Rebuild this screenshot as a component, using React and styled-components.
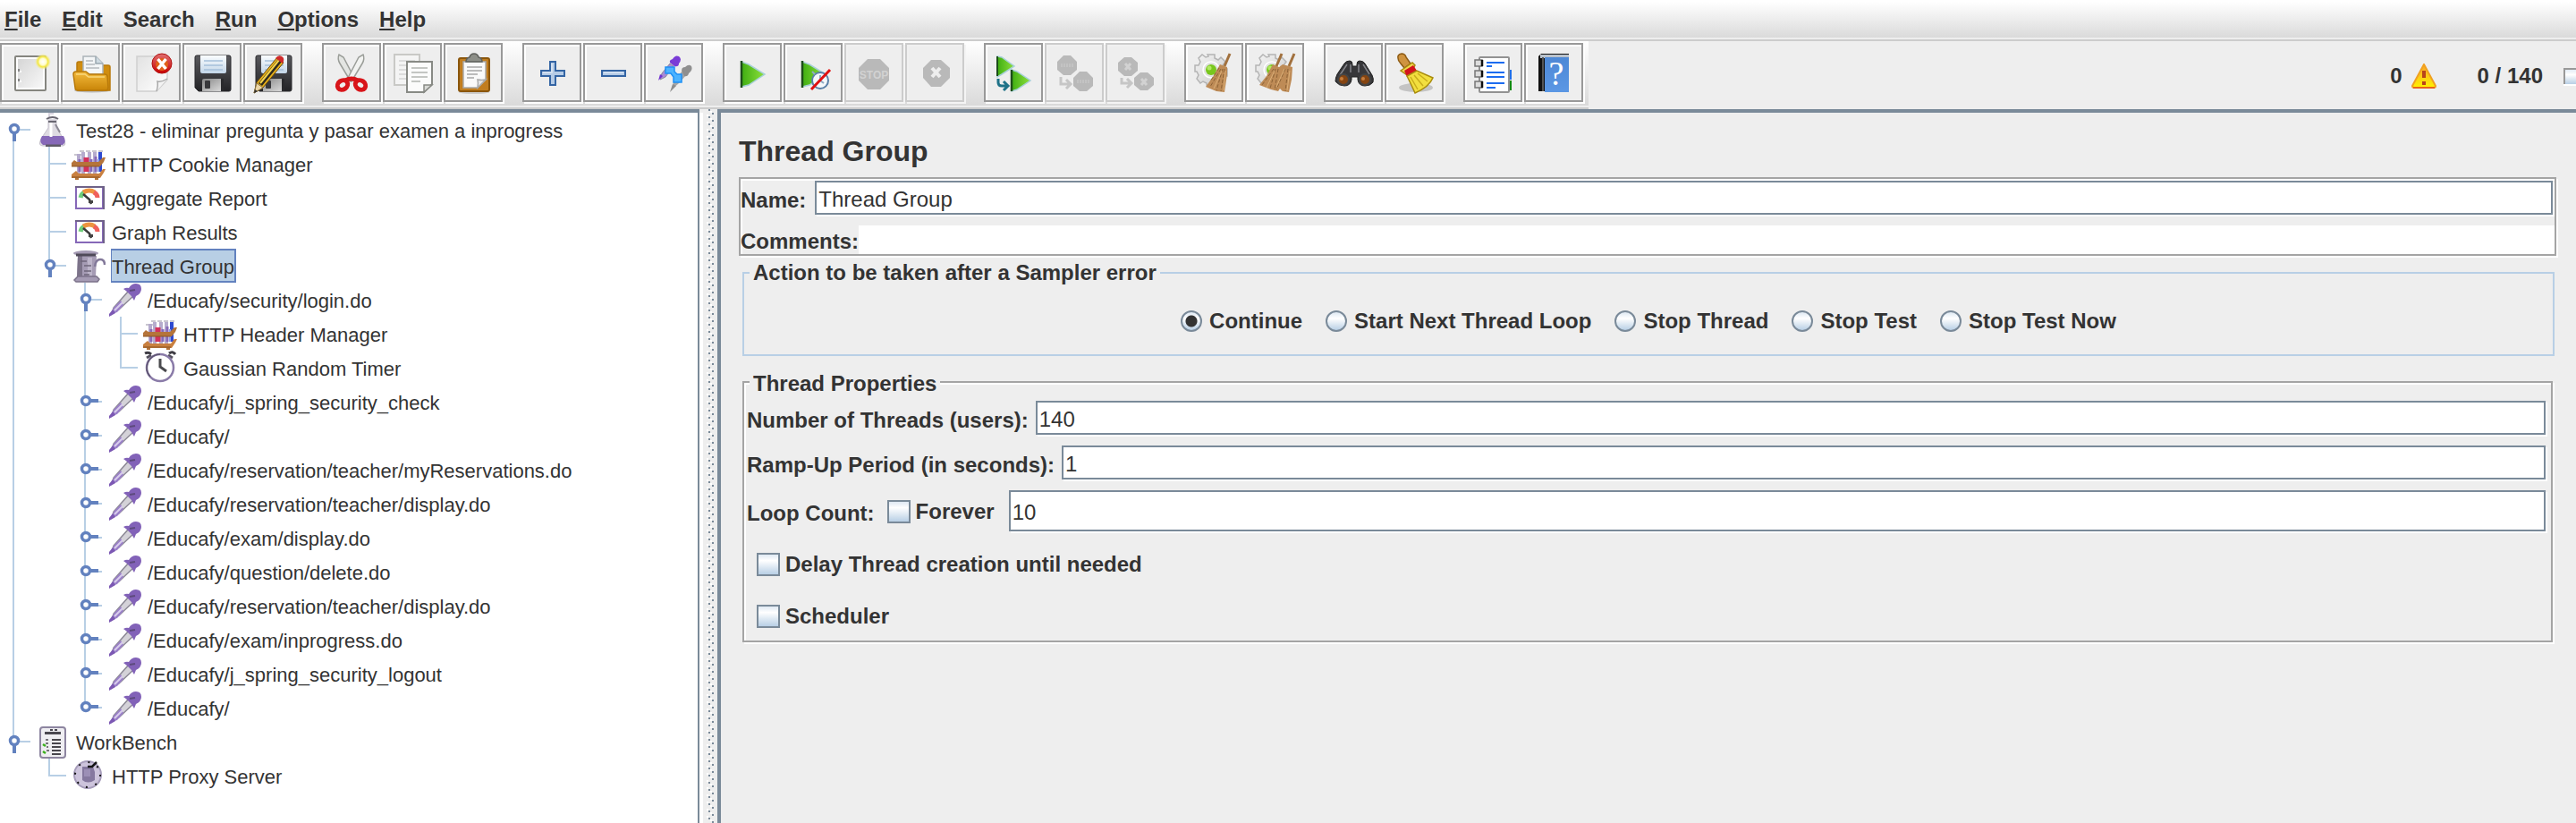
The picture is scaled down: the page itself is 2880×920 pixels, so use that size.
import React, { useState } from "react";
import styled, { createGlobalStyle, css } from "styled-components";

const C = {
  panel: "#eeeeee",
  text: "#333333",
  steel: "#7a8a99",
  gray: "#999999",
  etched: "#a4a4a4",
  sky: "#b8cfe5",
  blue: "#6382bf",
};

const GlobalStyle = createGlobalStyle`
  * { box-sizing: border-box; }
  body {
    margin: 0;
    background: ${C.panel};
    color: ${C.text};
    font: bold 24px/28px "Liberation Sans", Arial, sans-serif;
  }
  button, input { font: inherit; color: inherit; margin: 0; }
`;

const Window = styled.div`
  display: flex;
  flex-direction: column;
  min-height: 100vh;
  overflow: hidden;
`;

/* ---------- menu bar ---------- */

const MenuBar = styled.nav`
  display: flex;
  gap: 23px;
  height: 46px;
  padding: 8px 5px 0;
  border-bottom: 2px solid #cccccc;
  background: linear-gradient(#ffffff 2px, #dadada 42px, ${C.panel} 42px);
`;

const MenuItem = styled.button`
  padding: 0;
  border: 0;
  background: none;
  height: 28px;
`;

const Mnemonic = styled.span`
  text-decoration: underline 2px;
  text-underline-offset: 2px;
  text-decoration-skip-ink: none;
`;

/* ---------- tool bar ---------- */

const ToolRow = styled.header`
  display: flex;
  align-items: flex-start;
  justify-content: space-between;
`;

const ToolBar = styled.div`
  display: flex;
  gap: 22px;
  height: 76px;
  padding: 2px 6px 0 0;
  border-bottom: 2px solid #cccccc;
  background: linear-gradient(#ffffff, #dadada 72px, ${C.panel} 72px);
`;

const ToolGroup = styled.div`
  display: flex;
  gap: 2px;
`;

const ToolButton = styled.button`
  display: flex;
  align-items: center;
  justify-content: center;
  width: 66px;
  height: 66px;
  padding: 0;
  border: 2px solid ${C.gray};
  background: ${C.panel};
  box-shadow: 2px 2px 0 #fff, inset 2px 2px 0 #fff;
  &:disabled {
    border-color: #cccccc;
    box-shadow: 2px 2px 0 #f4f4f4, inset 2px 2px 0 #f0f0f0;
  }
`;

const Status = styled.div`
  display: flex;
  align-items: center;
  height: 76px;
  padding-top: 2px;
`;

const Warnings = styled.div`
  display: flex;
  align-items: center;
  gap: 10px;
  margin-right: 46px;
`;

const Activity = styled.div`
  width: 14px;
  height: 18px;
  margin-left: 23px;
  border: 2px solid ${C.gray};
  border-width: 2px 0 0 2px;
  background: linear-gradient(#e3ecf5, #ffffff 35%, ${C.sky});
  box-shadow: 0 2px 0 #fff;
`;

/* ---------- split pane ---------- */

const Split = styled.main`
  display: flex;
  flex: 1;
`;

const TreePane = styled.aside`
  flex: 0 0 782px;
  border-top: 4px solid ${C.steel};
  border-right: 2px solid ${C.steel};
  background: #fff;
  margin-right: 4px;
  box-shadow: 4px 4px 0 #fff;
`;

const Divider = styled.div`
  flex: 0 0 16px;
  background:
    conic-gradient(from 270deg at 2px 2px, ${C.steel} 90deg, transparent 0) 6px 8px / 8px 8px repeat-y,
    conic-gradient(from 270deg at 2px 2px, ${C.steel} 90deg, transparent 0) 10px 12px / 8px 8px repeat-y,
    conic-gradient(from 270deg at 2px 2px, #fff 90deg, transparent 0) 4px 6px / 8px 8px repeat-y,
    conic-gradient(from 270deg at 2px 2px, #fff 90deg, transparent 0) 8px 10px / 8px 8px repeat-y,
    ${C.panel};
`;

const Editor = styled.section`
  flex: 1;
  min-width: 0;
  padding: 25px 20px 20px;
  border: solid ${C.steel};
  border-width: 4px 0 0 4px;
`;

/* ---------- tree ---------- */

const Row = styled.div`
  display: flex;
  height: 38px;
`;

const Label = styled.span`
  height: 38px;
  margin-left: 6px;
  padding-top: 2px;
  font-weight: normal;
  font-size: 22px;
  line-height: 34px;
  white-space: pre;
  border: 2px solid transparent;
  border-left-width: 1px;
  ${(p) =>
    p.$selected &&
    css`
      border-color: ${C.blue};
      background: ${C.sky};
    `}
`;

/* ---------- editor ---------- */

const etched = css`
  border: 2px solid ${C.etched};
  box-shadow: 2px 2px 0 #fff, inset 2px 2px 0 #fff;
`;

const Title = styled.h1`
  margin: 0 0 11px;
  font-size: 32px;
  line-height: 36px;
`;

const NamePanel = styled.div`
  ${etched}
  display: flex;
  flex-direction: column;
  gap: 10px;
  margin: 0 2px 5px 0;
  padding-top: 2px;
`;

const Field = styled.div`
  display: flex;
  align-items: center;
  height: ${(p) => p.$height || 40}px;
`;

const FieldLabel = styled.label`
  flex: none;
  padding-top: 4px;
`;

const TextInput = styled.input`
  flex: 1;
  min-width: 0;
  align-self: stretch;
  margin: 0 2px 2px 10px;
  padding: 4px 2px 0;
  border: 2px solid ${C.steel};
  border-radius: 0;
  outline: 0;
  background: #fff;
  font-weight: normal;
  box-shadow: 2px 2px 0 #fff;
`;

const CommentInput = styled(TextInput)`
  margin: 0;
  border: 0;
  box-shadow: none;
`;

const ActionBox = styled.fieldset`
  min-width: 0;
  margin: 0 4px 13px;
  padding: 26px 0 23px;
  border: 2px solid ${C.sky};
`;

const ThreadBox = styled.fieldset`
  ${etched}
  min-width: 0;
  margin: 0 6px 0 4px;
  padding: 5px 4px 13px 3px;
`;

const Legend = styled.legend`
  margin-left: ${(p) => p.$indent}px;
  padding: ${(p) => p.$drop}px 4px 0;
  background: ${C.panel};
`;

const RadioRow = styled.div`
  display: flex;
  justify-content: center;
  gap: 26px;
`;

const Choice = styled.label`
  display: flex;
  align-items: center;
  gap: 8px;
  height: 28px;
`;

const Radio = styled.input.attrs({ type: "radio" })`
  appearance: none;
  width: 24px;
  height: 24px;
  border: 2px solid ${C.steel};
  border-radius: 50%;
  background: linear-gradient(#dfe9f3, #ffffff 35%, ${C.sky});
  &:checked {
    background: radial-gradient(circle, ${C.text} 6px, transparent 7px),
      linear-gradient(#dfe9f3, #ffffff 35%, ${C.sky});
  }
`;

const Check = styled.input.attrs({ type: "checkbox" })`
  appearance: none;
  width: 26px;
  height: 26px;
  border: 2px solid ${C.steel};
  background: linear-gradient(#dfe9f3, #ffffff 30%, ${C.sky});
  &:checked {
    background: ${C.steel};
  }
`;

const CheckLabel = styled(Choice)`
  gap: 6px;
`;

const LoopCheck = styled(CheckLabel)`
  margin: 0 8px 0 14px;
`;

const Fields = styled.div`
  display: flex;
  flex-direction: column;
  gap: 10px;
  ${TextInput} {
    margin-left: 8px;
  }
`;

const Checks = styled.div`
  display: flex;
  flex-direction: column;
  align-items: flex-start;
  gap: 30px;
  margin: 21px 0 0 11px;
`;

/* ---------- tool icons, all on a 48 unit canvas ---------- */

const Ico = ({ children, size = 48 }) => (
  <svg width={size} height={size} viewBox={`0 0 ${size} ${size}`} fill="none" aria-hidden="true">
    {children}
  </svg>
);

const grad = (id, a, b, x2 = 0, y2 = 1) => (
  <linearGradient id={id} x1="0" y1="0" x2={x2} y2={y2}>
    <stop offset="0" stopColor={a} />
    <stop offset="1" stopColor={b} />
  </linearGradient>
);

const NewIcon = () => (
  <Ico>
    <defs>
      {grad("pg", "#d2d2d2", "#fbfbfb", 1, 1)}
      <radialGradient id="glow">
        <stop offset="0" stopColor="#fff" />
        <stop offset=".4" stopColor="#fffdd0" />
        <stop offset=".65" stopColor="#f3e640" />
        <stop offset="1" stopColor="#f6ee90" stopOpacity="0" />
      </radialGradient>
    </defs>
    <rect x="8" y="6" width="34" height="38" rx="1" fill="url(#pg)" stroke="#85857f" strokeWidth="2" />
    <rect x="10" y="8" width="30" height="34" stroke="#fff" strokeWidth="2" />
    <path d="M12 20v3M12 31v3" stroke="#888" strokeWidth="2" />
    <path d="M14 22v2M14 33v2" stroke="#fff" strokeWidth="2" />
    <circle cx="39" cy="12" r="9" fill="url(#glow)" />
  </Ico>
);

const OpenIcon = () => (
  <Ico>
    <defs>{grad("fd", "#f3ba3c", "#c98508")}</defs>
    <ellipse cx="26" cy="44" rx="20" ry="2.500" fill="#bbb" />
    <path d="M9 24V14q0-2 2-2h6l3 4h24q2 0 2 2l0 26H10z" fill="#d08d10" stroke="#b97a0a" strokeWidth="1.500" />
    <path d="M16 26V6h14l8 8v12z" fill="#f4f6f7" stroke="#aab2b8" strokeWidth="1.500" />
    <path d="M30 6v8h8" fill="#cfdbe2" stroke="#9aa8b0" strokeWidth="1.500" />
    <path d="M19 11h8M19 15h10M19 19h15" stroke="#c5c9cc" strokeWidth="2" />
    <path d="M5 26q0-3 3-3h11l4 3h17q3 0 3 3l1 12q0 3-3 3H10q-3 0-3-3z" fill="url(#fd)" stroke="#b97a0a" strokeWidth="1.500" />
    <path d="M8 26h10l4 3h18" stroke="#f9d77c" strokeWidth="1.500" />
  </Ico>
);

const CloseIcon = () => (
  <Ico>
    <defs>
      {grad("cl", "#e2e2e2", "#ffffff", 1, 1)}
      {grad("rd", "#e07070", "#c80000")}
    </defs>
    <path d="M8 6h34v26L30 45H8z" fill="url(#cl)" stroke="#d0d0d0" strokeWidth="1.500" />
    <path d="M30 45q2-7 1-11 5 1 11-3" fill="#f3f3f3" stroke="#aaa" strokeWidth="1.500" />
    <circle cx="36" cy="14" r="11" fill="url(#rd)" stroke="#b01010" strokeWidth="1" />
    <circle cx="36" cy="15" r="7" fill="#e06018" />
    <path d="M31.500 9l9 11M40.500 9l-9 11" stroke="#fff" strokeWidth="3.500" />
  </Ico>
);

const Floppy = () => (
  <>
    <defs>
      {grad("fl", "#5a5a5e", "#232326")}
      {grad("lb", "#fafdff", "#c3d6e8")}
      {grad("sh", "#888", "#ddd", 1, 1)}
    </defs>
    <path d="M5 7q0-2 2-2h36q2 0 2 2v36q0 2-2 2H9l-4-4z" fill="url(#fl)" stroke="#2b2b2e" strokeWidth="1" />
    <path d="M11 5h29v18q0 2-2 2H13q-2 0-2-2z" fill="url(#lb)" />
    <path d="M15 11h21M15 16h21M15 21h21" stroke="#a5c0da" strokeWidth="1.500" />
    <path d="M13 45V33q0-2 2-2h19q2 0 2 2v12z" fill="url(#sh)" />
    <rect x="16" y="33" width="6" height="9" rx="1" fill="#38383b" />
    <path d="M34 31h3v14h-3z" fill="#2a2a2d" />
  </>
);

const SaveIcon = () => (
  <Ico>
    <Floppy />
  </Ico>
);

const SaveAsIcon = () => (
  <Ico>
    <Floppy />
    <path d="M3 47l3-12L29 7l7 6L13 41z" fill="#e8b21c" stroke="#6d4a08" strokeWidth="1" />
    <path d="M8 36L30 9l4 3L12 39z" fill="#2e2a1c" />
    <path d="M10 36L31 10" stroke="#f6d34a" strokeWidth="2" />
    <path d="M27 8q3-4 7-2t1 8l-8-6z" fill="#cf2a2a" />
    <path d="M3 47l3-11 7 5z" fill="#ecd6a6" stroke="#8b7444" strokeWidth="1" />
    <path d="M3 47l1-4 3 2z" fill="#333" />
  </Ico>
);

const CutIcon = () => (
  <Ico>
    <path d="M10 4q-2 5 1 10l12 20 4-4L15 7z" fill="#e3e5e2" stroke="#9a9d98" strokeWidth="1.500" />
    <path d="M37 4q2 5-1 10L24 34l-4-4L32 7z" fill="#f2f3f1" stroke="#9a9d98" strokeWidth="1.500" />
    <path d="M17 33q7-4 14 0" stroke="#d8151a" strokeWidth="5" />
    <ellipse cx="14" cy="38" rx="6" ry="5" transform="rotate(-35 14 38)" stroke="#d8151a" strokeWidth="5" />
    <ellipse cx="34" cy="38" rx="6" ry="5" transform="rotate(35 34 38)" stroke="#d8151a" strokeWidth="5" />
  </Ico>
);

const CopyIcon = () => (
  <Ico>
    <rect x="4" y="4" width="28" height="34" fill="#f4f4f4" stroke="#c9c9c6" strokeWidth="2" />
    <path d="M9 11h18M9 16h8M9 21h8M9 26h8M9 31h8" stroke="#dcdcdc" strokeWidth="2" />
    <path d="M18 12h28v25l-9 9H18z" fill="#fbfbfb" stroke="#888a85" strokeWidth="2" />
    <path d="M23 19h18M23 24h18M23 29h18M23 34h10" stroke="#c4c6c3" strokeWidth="2" />
    <path d="M37 46v-8h9z" fill="#d9dad7" stroke="#888a85" strokeWidth="1.500" />
  </Ico>
);

const PasteIcon = () => (
  <Ico>
    <ellipse cx="25" cy="46" rx="17" ry="2" fill="#ccc" />
    <rect x="8" y="8" width="34" height="37" rx="2" fill="#c17d1f" stroke="#8a560c" strokeWidth="2" />
    <path d="M13 12h25v20l-9 9H13z" fill="#fafafa" stroke="#aaa" strokeWidth="1.500" />
    <path d="M17 18h17M17 22h17M17 26h12M17 30h8" stroke="#a8a8a8" strokeWidth="1.500" />
    <path d="M29 41q1-5 0-9 5 1 9 0z" fill="#e8e8e8" stroke="#aaa" strokeWidth="1.500" />
    <path d="M16 12q0-4 4-5 1-4 5-4t5 4q4 1 4 5z" fill="#8d8f88" stroke="#5e605b" strokeWidth="1.500" />
  </Ico>
);

const PlusIcon = () => (
  <Ico>
    <path d="M22 12h6v10h10v6H28v10h-6V28H12v-6h10z" fill="#b5cbe6" stroke="#3465a4" strokeWidth="2" />
    <path d="M24 14v10H14" stroke="#dbe7f4" strokeWidth="1.500" />
  </Ico>
);

const MinusIcon = () => (
  <Ico>
    <path d="M12 22h26v6H12z" fill="#b5cbe6" stroke="#3465a4" strokeWidth="2" />
    <path d="M14 24h22" stroke="#dbe7f4" strokeWidth="1.500" />
  </Ico>
);

const ToggleIcon = () => (
  <Ico>
    <path d="M9 32l2-7 9-11 4 3-9 12z" fill="#a98ad6" stroke="#8a8a9a" strokeWidth="1" />
    <path d="M7 33l2-7 3 2z" fill="#6f2fd0" />
    <path d="M20 13q-1-3 3-4 3-5 7-3 4 3 0 8 0 4-5 3z" fill="#7a3bd6" />
    <path d="M22 43l2-9 10-12 5 4-9 10z" fill="#a6a6a6" />
    <path d="M33 22q0-4 4-4 4-4 7-1 2 4-3 8-1 4-5 3z" fill="#8f8f8f" />
    <path d="M20 46l3-9 4 2z" fill="#8c8c8c" />
    <path d="M15 18h10v5l3 3h5v9h-9v-6l-3-4h-6z" fill="#4db3ff" stroke="#1e90f5" strokeWidth="1.500" />
  </Ico>
);

const Play = () => (
  <>
    <defs>{grad("pl", "#3fae12", "#8ee03c", 1, 0)}</defs>
    <path d="M12 40V12l8 3 18 11-18 12z" fill="url(#pl)" stroke="#a8d0d8" strokeWidth="1.500" />
    <path d="M12 41V11" stroke="#1d4d1a" strokeWidth="2.500" />
  </>
);

const RunIcon = () => (
  <Ico>
    <Play />
  </Ico>
);

const RunNoPauseIcon = () => (
  <Ico>
    <Play />
    <circle cx="32" cy="33" r="9" fill="#f4f8fb" stroke="#5a80a8" strokeWidth="2" />
    <path d="M32 27v6l4 3M23 23l3 3" stroke="#8eaac4" strokeWidth="2" />
    <path d="M22 43L43 21" stroke="#e01010" strokeWidth="3" />
  </Ico>
);

const StopSign = styled.text`
  font: bold 12px "Liberation Sans", Arial, sans-serif;
`;

const StopIcon = () => (
  <Ico>
    <path d="M17 9h14l10 10v14L31 43H17L7 33V19z" fill="#b9b9b9" />
    <StopSign x="24" y="31" textAnchor="middle" fill="#d2d2d2">
      STOP
    </StopSign>
  </Ico>
);

const ShutdownIcon = () => (
  <Ico>
    <path d="M20 10h11l10 9v11l-10 10H20l-9-10V19z" fill="#b9b9b9" />
    <path d="M21 19l9 10M30 19l-9 10" stroke="#eee" strokeWidth="4" />
  </Ico>
);

const RemoteRunIcon = () => (
  <Ico>
    <defs>{grad("rr", "#3fae12", "#8ee03c", 1, 0)}</defs>
    <path d="M6 6l5 1 14 10-14 9-5 3z" fill="url(#rr)" stroke="#a8d0d8" strokeWidth="1.500" />
    <path d="M6 6v22" stroke="#1d4d1a" strokeWidth="2" />
    <path d="M22 21l6 2 15 10-15 10-6 2z" fill="url(#rr)" stroke="#a8d0d8" strokeWidth="1.500" />
    <path d="M22 21v24" stroke="#1d4d1a" strokeWidth="2.500" />
    <path d="M7 31v4q0 4 4 4h7M13 34l5 5-5 5" stroke="#1f7288" strokeWidth="3" />
  </Ico>
);

const RemoteStopIcon = () => (
  <Ico>
    <path d="M12 5h8l7 7v9l-7 6h-8l-7-6v-9zM30 23h8l7 7v9l-7 6h-8l-7-6v-9z" fill="#b9b9b9" />
    <path d="M9 16h14M27 34h14" stroke="#c3c3c3" strokeWidth="4" strokeDasharray="2 1" />
    <path d="M9 29v8h9M15 32l5 5-5 5" stroke="#c6c6c6" strokeWidth="3" />
  </Ico>
);

const RemoteShutdownIcon = () => (
  <Ico>
    <path d="M12 7h8l7 6v9l-7 6h-8l-7-6v-9zM30 24h8l7 6v8l-7 6h-8l-7-6v-8z" fill="#b9b9b9" />
    <path d="M13 14l6 7M19 14l-6 7M31 31l6 7M37 31l-6 7" stroke="#d2d2d2" strokeWidth="3" />
    <path d="M9 30v6h9M15 31l5 5-5 5" stroke="#c6c6c6" strokeWidth="3" />
  </Ico>
);

const Gear = () => (
  <>
    <defs>{grad("gr", "#f4f4f4", "#c9c9c9", 1, 1)}</defs>
    <path
      d="M17 4h8v4l4 2 3-3 5 5-3 4 2 4h3v8h-4l-2 4 3 3-5 5-4-3-4 2v-1h-7v-2l-4-2-3 2-4-5 2-4-2-4H3v-7h4l2-4-2-4 4-4 4 3 3-1z"
      fill="url(#gr)"
      stroke="#b4b4b4"
      strokeWidth="1.500"
    />
    <circle cx="21" cy="21" r="9" fill="#e2e2e2" stroke="#fff" strokeWidth="1.500" />
    <circle cx="21" cy="21" r="6" fill="#79c71d" />
    <circle cx="19" cy="19" r="2.500" fill="#b2ea63" />
  </>
);

const ClearIcon = () => (
  <Ico>
    <Gear />
    <path d="M42 3l-6 14" stroke="#a2713e" strokeWidth="3" />
    <path d="M31 15l8 3 0 8-3 20-9-1-12-5 8-11z" fill="#be8b56" />
    <path d="M32 20l-12 20M34 20l-7 24M36 20l-4 25M30 19l-10 15" stroke="#8c6236" strokeWidth="1" strokeDasharray="4 2" />
    <path d="M33 22l-9 20M37 22l-2 22" stroke="#dcb078" strokeWidth="1" />
  </Ico>
);

const ClearAllIcon = () => (
  <Ico>
    <Gear />
    <path d="M32 3l-6 14M46 3l-6 14" stroke="#a2713e" strokeWidth="3" />
    <path d="M22 15l7 3 4-3 11 3-1 14-3 14-7-1-3-3-2 3-8-2-13-5 8-10z" fill="#be8b56" />
    <path d="M23 20L10 38M25 20l-6 22M36 20L26 43M39 20l-3 25M28 20l-4 24" stroke="#8c6236" strokeWidth="1" strokeDasharray="4 2" />
    <path d="M24 22l-9 19M41 22l-3 22M35 20l-9 20" stroke="#dcb078" strokeWidth="1" />
  </Ico>
);

const SearchIcon = () => (
  <Ico>
    <path
      d="M14 14q2-3 6-3 3 0 3 4v2h5v-2q0-4 3-4 4 0 6 3l8 13q2 4 1 8-3 4-9 4-7 0-8-7v-3h-7v3q-1 7-8 7-6 0-10-5 0-4 2-8z"
      fill="#37373a"
      stroke="#222"
      strokeWidth="1"
    />
    <path d="M17 15l-8 12M35 15l7 11M21 15v9M30 15v9" stroke="#85858a" strokeWidth="1.500" />
    <circle cx="13" cy="32" r="6" fill="#854512" stroke="#444" strokeWidth="2" />
    <circle cx="37" cy="32" r="6" fill="#854512" stroke="#444" strokeWidth="2" />
    <circle cx="11" cy="31" r="2" fill="#c67c3c" />
    <circle cx="35" cy="31" r="2" fill="#c67c3c" />
  </Ico>
);

const ResetSearchIcon = () => (
  <Ico>
    <ellipse cx="26" cy="41" rx="19" ry="5" fill="#c4c4c4" />
    <path d="M6 8q-1-4 4-5 4 0 5 4l5 7-7 5-4-5q-3-3-3-6z" fill="#cf9440" stroke="#8d5b14" strokeWidth="1.500" />
    <path d="M9 22l13-9 3 3-2 4-8 6z" fill="#f0d84c" stroke="#a98c0e" strokeWidth="1.500" />
    <path d="M13 22l10-6 4 6-11 7z" fill="#d4141c" />
    <path d="M16 28l11-6q9 4 18 8-4 10-20 17-3-7-9-19z" fill="#f2df3f" stroke="#a98c0e" strokeWidth="1.500" />
    <path d="M20 29l8 14M24 27l10 12M28 25l11 9" stroke="#c9ad1c" strokeWidth="1.500" />
  </Ico>
);

const FunctionIcon = () => (
  <Ico>
    <path d="M40 21h5v11h-5z" fill="#1f6fe8" />
    <path d="M40 33h5v11h-5z" fill="#128a12" />
    <rect x="9" y="7" width="33" height="39" rx="1" fill="#fff" stroke="#929292" strokeWidth="2" />
    <path d="M9 10h3v7H4v-7h5M9 22h3v7H4v-7h5M9 34h3v7H4v-7h5" fill="#ddd" stroke="#777" strokeWidth="1.500" />
    <path d="M12 10v7M12 22v7M12 34v7" stroke="#111" strokeWidth="2.500" />
    <path d="M17 13h20M17 24h20M17 29h20M17 36h20" stroke="#1c6cf0" strokeWidth="2" />
    <path d="M17 17h6M17 41h10" stroke="#1c6cf0" strokeWidth="2" />
  </Ico>
);

const HelpMark = styled.text`
  font: 38px "Liberation Serif", "Times New Roman", serif;
`;

const HelpIcon = () => (
  <Ico>
    <defs>{grad("bk", "#4d88d6", "#5b97e4")}</defs>
    <path d="M7 6l3-3h31v42H7z" fill="#111" />
    <path d="M9 4h32v4H9z" fill="#b9c2cc" />
    <path d="M14 7h27v39H14z" fill="url(#bk)" />
    <path d="M12 7v38" stroke="#555" strokeWidth="2" />
    <HelpMark x="27" y="38" textAnchor="middle" fill="#fff">
      ?
    </HelpMark>
  </Ico>
);

const WarnIcon = () => (
  <Ico size={28}>
    <defs>{grad("wn", "#f9a32b", "#fff200")}</defs>
    <path d="M14 1l13 24q0 2-2 2H3q-2 0-2-2z" fill="url(#wn)" stroke="#f0a020" strokeWidth="2" />
    <path d="M2 27h24" stroke="#e8641a" strokeWidth="2" />
    <path d="M12 8h4v8h-4zM12 20h4v4h-4z" fill="#b8431a" />
  </Ico>
);

/* ---------- tree icons, 38 unit canvas ---------- */

const FlaskIcon = () => (
  <Ico size={38}>
    <path d="M20 1h-5v4" stroke="#d8d4de" strokeWidth="2" />
    <path d="M14 8v9L6 29q-4 8 2 8h22q5 0 1-8l-8-12V8z" fill="#dedbe2" stroke="#c3bfca" strokeWidth="1" />
    <path d="M7 26h24q4 7-1 10H8q-5-3-1-10z" fill="#8668b8" />
    <path d="M17 10v17" stroke="#fff" strokeWidth="3" />
    <path d="M11 37h17" stroke="#5e5a66" strokeWidth="3" />
    <path d="M12 7q7-4 13 0M14 10h9" stroke="#6a6872" strokeWidth="2" />
    <path d="M22 13l5 9" stroke="#8b8894" strokeWidth="2" />
  </Ico>
);

const RackIcon = () => (
  <Ico size={38}>
    <path d="M3 9h8M9 5h5M16 5h5M23 5h5M30 5h5" stroke="#c9c6cf" strokeWidth="2" />
    <path d="M8 8v22M13 6v24M20 6v24M26 6v24" stroke="#b5abcd" strokeWidth="4" />
    <path d="M9 14v14M22 14v14" stroke="#8668b8" strokeWidth="3" />
    <path d="M15 12v16M18 12v16" stroke="#d3305c" strokeWidth="3" />
    <path d="M27 11v17" stroke="#8668b8" strokeWidth="3" />
    <path d="M32 6v22" stroke="#2e49cf" strokeWidth="4" />
    <path d="M30 14v14" stroke="#8fa0e8" strokeWidth="2" />
    <path d="M0 18l3-3 3 2h24l5-5h3l-2 5-4 5H0z" fill="#b5743a" />
    <path d="M0 31l5-4 3 3h23l4-5h3l-2 4-4 6H0z" fill="#c98040" />
    <path d="M4 34h4v3H4zM26 34h4v3h-4z" fill="#b5743a" />
    <path d="M0 22h31M0 34h31" stroke="#8b5522" strokeWidth="1" />
  </Ico>
);

const ReportIcon = () => (
  <Ico size={38}>
    <rect x="5" y="7" width="30" height="24" fill="#fff" stroke="#8668b8" strokeWidth="2" />
    <path d="M4 7h32v25" stroke="#6f6288" strokeWidth="2" />
    <path d="M10 19q1-5 5-6" stroke="#6fce7a" strokeWidth="5" />
    <path d="M13 13q7-4 13 0" stroke="#ee9440" strokeWidth="5" />
    <path d="M25 13q4 2 4 6" stroke="#f0605c" strokeWidth="5" />
    <path d="M13 15l7 6 2 5" stroke="#3b3b3b" strokeWidth="2.500" />
    <path d="M19 22h5v3h-5z" fill="#444" />
  </Ico>
);

const SpoolIcon = () => (
  <Ico size={38}>
    <path d="M7 8h21l-1 24H6z" fill="#a59bb4" />
    <path d="M7 8h5v25H6z" fill="#7c7389" />
    <path d="M18 10h5v22h-5z" fill="#bdb5ca" />
    <path d="M10 14h7M14 19h8M14 25h8M14 29h6" stroke="#6d6679" strokeWidth="1.500" />
    <ellipse cx="16" cy="5" rx="14" ry="3" fill="#a59bb4" />
    <path d="M5 7h22" stroke="#4f4a58" strokeWidth="3" />
    <path d="M3 35l4-4h21l3 3-2 3H5z" fill="#a59bb4" stroke="#7b7289" strokeWidth="1.500" />
    <path d="M26 20q1-8 6-8 5 0 5 6" stroke="#83799a" strokeWidth="2.500" />
  </Ico>
);

const PipetteIcon = () => (
  <Ico size={38}>
    <path d="M5 35l2-7L24 9l5 6-16 15z" fill="#d4d2d8" stroke="#8b8894" strokeWidth="1.500" />
    <path d="M5 35l2-7 8-8 3 5-7 8z" fill="#9a80c8" />
    <path d="M8 31l9-9" stroke="#d9cdec" strokeWidth="2" />
    <path d="M2 38v-3l4-5 3 4z" fill="#7c58b4" />
    <path d="M18 7q3-2 6-1 3-5 8-5 6 0 6 6 0 5-6 8l-2 5-3-5-5-5z" fill="#8262b8" />
    <path d="M25 9l6-1" stroke="#5d4a7d" strokeWidth="2" />
  </Ico>
);

const TimerIcon = () => (
  <Ico size={38}>
    <path d="M2 3q4-2 7 1M29 3q4-3 7 1" stroke="#3e3c44" strokeWidth="3" />
    <path d="M4 8l5-3M33 8l-5-3" stroke="#55515e" strokeWidth="3" />
    <circle cx="19" cy="19" r="15" fill="#fff" stroke="#8a7ba8" strokeWidth="2.500" />
    <path d="M19 4a15 15 0 0 0-11 25" stroke="#5f5670" strokeWidth="1.500" />
    <path d="M19 9v9l7 5" stroke="#4a4a4e" strokeWidth="3" />
  </Ico>
);

const WorkBenchIcon = () => (
  <Ico size={38}>
    <rect x="5" y="3" width="28" height="34" rx="3" fill="#efeef2" stroke="#8d85a0" strokeWidth="2" />
    <path d="M10 8h18v3H10zM16 5h3v2h-3zM21 5h3v2h-3z" fill="#4a4850" />
    <path d="M18 17h10M18 21h10M18 25h10M18 29h10M18 33h10" stroke="#48464c" strokeWidth="2" />
    <path d="M11 17h3M12 29h3M12 25h2M11 21h3" stroke="#77747c" strokeWidth="2" />
    <path d="M8 22l3 2M8 30l3 2" stroke="#3ab01c" strokeWidth="2.500" />
  </Ico>
);

const ProxyIcon = () => (
  <Ico size={38}>
    <circle cx="18" cy="18" r="15" fill="#cdc4dc" stroke="#a79dbb" strokeWidth="2" />
    <circle cx="18" cy="18" r="14" stroke="#111" strokeWidth="2" strokeDasharray="2 9" />
    <path d="M12 9h12l2 6v9q-8 5-14 0z" fill="#85789f" />
    <path d="M14 12h7v8h-7z" fill="#9c8fb6" />
    <path d="M18 9h5l5-5" stroke="#151515" strokeWidth="2.500" />
  </Ico>
);

/* ---------- tree connectors, 40 x 38 cells ---------- */

const Cell = ({ up, down, branch, handle }) => (
  <svg width="40" height="38" viewBox="0 0 40 38" fill="none" aria-hidden="true">
    {up && <path d="M15 0v20" stroke={C.sky} strokeWidth="2" />}
    {down && <path d="M15 18v20" stroke={C.sky} strokeWidth="2" />}
    {branch && <path d="M14 19h20" stroke={C.sky} strokeWidth="2" />}
    {handle === "open" && <path d="M16 22v10" stroke={C.blue} strokeWidth="4" />}
    {handle === "closed" && <path d="M20 18h10" stroke={C.blue} strokeWidth="4" />}
    {handle && <circle cx="16" cy="18" r="4.500" fill="#fff" stroke={C.blue} strokeWidth="3.500" />}
  </svg>
);

const sampler = (text, last) => ({
  text,
  icon: PipetteIcon,
  cells: [{ up: true, down: true }, {}, { up: true, down: !last, branch: true, handle: "closed" }],
});

const LINE = { up: true, down: true };
const TEE = { up: true, down: true, branch: true };
const ELBOW = { up: true, branch: true };

const NODES = [
  { text: "Test28 - eliminar pregunta y pasar examen a inprogress", icon: FlaskIcon, cells: [{ down: true, branch: true, handle: "open" }] },
  { text: "HTTP Cookie Manager", icon: RackIcon, cells: [LINE, TEE] },
  { text: "Aggregate Report", icon: ReportIcon, cells: [LINE, TEE] },
  { text: "Graph Results", icon: ReportIcon, cells: [LINE, TEE] },
  { text: "Thread Group", icon: SpoolIcon, cells: [LINE, { ...ELBOW, handle: "open" }], selected: true },
  { text: "/Educafy/security/login.do", icon: PipetteIcon, cells: [LINE, {}, { ...TEE, handle: "open" }] },
  { text: "HTTP Header Manager", icon: RackIcon, cells: [LINE, {}, LINE, TEE] },
  { text: "Gaussian Random Timer", icon: TimerIcon, cells: [LINE, {}, LINE, ELBOW] },
  sampler("/Educafy/j_spring_security_check"),
  sampler("/Educafy/"),
  sampler("/Educafy/reservation/teacher/myReservations.do"),
  sampler("/Educafy/reservation/teacher/display.do"),
  sampler("/Educafy/exam/display.do"),
  sampler("/Educafy/question/delete.do"),
  sampler("/Educafy/reservation/teacher/display.do"),
  sampler("/Educafy/exam/inprogress.do"),
  sampler("/Educafy/j_spring_security_logout"),
  sampler("/Educafy/", true),
  { text: "WorkBench", icon: WorkBenchIcon, cells: [{ ...ELBOW, handle: "open" }] },
  { text: "HTTP Proxy Server", icon: ProxyIcon, cells: [{}, ELBOW] },
];

const TOOLS = [
  [["New", NewIcon], ["Open", OpenIcon], ["Close", CloseIcon], ["Save", SaveIcon], ["Save as", SaveAsIcon]],
  [["Cut", CutIcon], ["Copy", CopyIcon], ["Paste", PasteIcon]],
  [["Expand all", PlusIcon], ["Collapse all", MinusIcon], ["Toggle", ToggleIcon]],
  [["Start", RunIcon], ["Start no pauses", RunNoPauseIcon], ["Stop", StopIcon, true], ["Shutdown", ShutdownIcon, true]],
  [["Remote start all", RemoteRunIcon], ["Remote stop all", RemoteStopIcon, true], ["Remote shutdown all", RemoteShutdownIcon, true]],
  [["Clear", ClearIcon], ["Clear all", ClearAllIcon]],
  [["Search", SearchIcon], ["Reset search", ResetSearchIcon]],
  [["Function helper", FunctionIcon], ["Help", HelpIcon]],
];

const MENUS = [
  ["F", "ile"],
  ["E", "dit"],
  ["", "Search"],
  ["R", "un"],
  ["O", "ptions"],
  ["H", "elp"],
];

const ACTIONS = ["Continue", "Start Next Thread Loop", "Stop Thread", "Stop Test", "Stop Test Now"];

export default function App() {
  const [action, setAction] = useState("Continue");
  return (
    <Window>
      <GlobalStyle />
      <MenuBar>
        {MENUS.map(([key, rest]) => (
          <MenuItem key={rest}>
            {key && <Mnemonic>{key}</Mnemonic>}
            {rest}
          </MenuItem>
        ))}
      </MenuBar>
      <ToolRow>
        <ToolBar>
          {TOOLS.map((group, i) => (
            <ToolGroup key={i}>
              {group.map(([name, Icon, disabled]) => (
                <ToolButton key={name} aria-label={name} disabled={!!disabled}>
                  <Icon />
                </ToolButton>
              ))}
            </ToolGroup>
          ))}
        </ToolBar>
        <Status>
          <Warnings>
            <span>0</span>
            <WarnIcon />
          </Warnings>
          <span>0 / 140</span>
          <Activity />
        </Status>
      </ToolRow>
      <Split>
        <TreePane role="tree" aria-label="Test plan">
          {NODES.map(({ text, icon: Icon, cells, selected }, i) => (
            <Row key={i} role="treeitem" aria-level={cells.length} aria-selected={!!selected}>
              {cells.map((cell, j) => (
                <Cell key={j} {...cell} />
              ))}
              <Icon />
              <Label $selected={selected}>{text}</Label>
            </Row>
          ))}
        </TreePane>
        <Divider />
        <Editor>
          <Title>Thread Group</Title>
          <NamePanel>
            <Field>
              <FieldLabel htmlFor="name">Name:</FieldLabel>
              <TextInput id="name" defaultValue="Thread Group" />
            </Field>
            <Field $height={32}>
              <FieldLabel htmlFor="comments">Comments:</FieldLabel>
              <CommentInput id="comments" />
            </Field>
          </NamePanel>
          <ActionBox>
            <Legend $indent={6} $drop={0}>Action to be taken after a Sampler error</Legend>
            <RadioRow>
              {ACTIONS.map((name) => (
                <Choice key={name}>
                  <Radio name="action" checked={action === name} onChange={() => setAction(name)} />
                  {name}
                </Choice>
              ))}
            </RadioRow>
          </ActionBox>
          <ThreadBox>
            <Legend $indent={3} $drop={4}>Thread Properties</Legend>
            <Fields>
              <Field>
                <FieldLabel htmlFor="threads">Number of Threads (users):</FieldLabel>
                <TextInput id="threads" defaultValue="140" />
              </Field>
              <Field>
                <FieldLabel htmlFor="ramp">Ramp-Up Period (in seconds):</FieldLabel>
                <TextInput id="ramp" defaultValue="1" />
              </Field>
              <Field $height={48}>
                <FieldLabel htmlFor="loops">Loop Count:</FieldLabel>
                <LoopCheck>
                  <Check />
                  Forever
                </LoopCheck>
                <TextInput id="loops" defaultValue="10" />
              </Field>
            </Fields>
            <Checks>
              <CheckLabel>
                <Check />
                Delay Thread creation until needed
              </CheckLabel>
              <CheckLabel>
                <Check />
                Scheduler
              </CheckLabel>
            </Checks>
          </ThreadBox>
        </Editor>
      </Split>
    </Window>
  );
}
